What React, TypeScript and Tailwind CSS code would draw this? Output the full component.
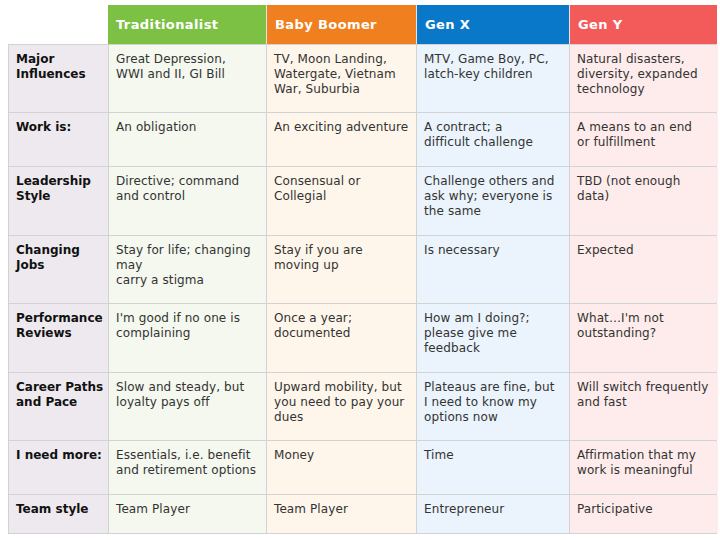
const headers = [
  { title: "Traditionalist", bg: "bg-[#7cc143]" },
  { title: "Baby Boomer", bg: "bg-[#f07f1f]" },
  { title: "Gen X", bg: "bg-[#0a78c8]" },
  { title: "Gen Y", bg: "bg-[#f35b5b]" },
];

const colBg = ["bg-[#f4f8ef]", "bg-[#fef6ea]", "bg-[#ebf4fc]", "bg-[#fdeceb]"];
const colW = ["w-[158px]", "w-[150px]", "w-[153px]", "w-[148px]"];

type Row = { label: string[]; h: string; cells: string[][] };

const rows: Row[] = [
  {
    label: ["Major", "Influences"],
    h: "h-[69px]",
    cells: [
      ["Great Depression,", "WWI and II, GI Bill"],
      ["TV, Moon Landing,", "Watergate, Vietnam", "War, Suburbia"],
      ["MTV, Game Boy, PC,", "latch-key children"],
      ["Natural disasters,", "diversity, expanded", "technology"],
    ],
  },
  {
    label: ["Work is:"],
    h: "h-[54px]",
    cells: [
      ["An obligation"],
      ["An exciting adventure"],
      ["A contract; a", "difficult challenge"],
      ["A means to an end", "or fulfillment"],
    ],
  },
  {
    label: ["Leadership", "Style"],
    h: "h-[69px]",
    cells: [
      ["Directive; command", "and control"],
      ["Consensual or", "Collegial"],
      ["Challenge others and", "ask why; everyone is", "the same"],
      ["TBD (not enough", "data)"],
    ],
  },
  {
    label: ["Changing", "Jobs"],
    h: "h-[68px]",
    cells: [
      ["Stay for life; changing", "may", "carry a stigma"],
      ["Stay if you are", "moving up"],
      ["Is necessary"],
      ["Expected"],
    ],
  },
  {
    label: ["Performance", "Reviews"],
    h: "h-[69px]",
    cells: [
      ["I'm good if no one is", "complaining"],
      ["Once a year;", "documented"],
      ["How am I doing?;", "please give me", "feedback"],
      ["What…I'm not", "outstanding?"],
    ],
  },
  {
    label: ["Career Paths", "and Pace"],
    h: "h-[68px]",
    cells: [
      ["Slow and steady, but", "loyalty pays off"],
      ["Upward mobility, but", "you need to pay your", "dues"],
      ["Plateaus are fine, but", "I need to know my", "options now"],
      ["Will switch frequently", "and fast"],
    ],
  },
  {
    label: ["I need more:"],
    h: "h-[54px]",
    cells: [
      ["Essentials, i.e. benefit", "and retirement options"],
      ["Money"],
      ["Time"],
      ["Affirmation that my", "work is meaningful"],
    ],
  },
  {
    label: ["Team style"],
    h: "h-[39px]",
    cells: [["Team Player"], ["Team Player"], ["Entrepreneur"], ["Participative"]],
  },
];

function Lines({ lines }: { lines: string[] }) {
  return (
    <>
      {lines.map((l, i) => (
        <div key={i} className="whitespace-nowrap">{l}</div>
      ))}
    </>
  );
}

export default function App() {
  return (
    <div className="w-[720px] h-[540px] bg-white pt-[5px] pl-[8px] font-['DejaVu_Sans',sans-serif]">
      {/* header */}
      <div className="flex h-[39px]">
        <div className="w-[100px]" />
        {headers.map((h, i) => (
          <div
            key={h.title}
            className={`${colW[i]} ${h.bg} ${i > 0 ? "border-l border-[#e4e4e4]" : ""} flex items-center pl-[8px] text-[13px] font-bold tracking-[0.4px] text-white`}
          >
            {h.title}
          </div>
        ))}
      </div>

      {/* body */}
      <div className="w-[709px] border-l border-[#d2d2d2]">
        {rows.map((r, ri) => (
          <div key={ri} className={`flex ${r.h} border-b border-[#d2d2d2] ${ri === 0 ? "border-t" : ""}`}>
            <div className="w-[100px] shrink-0 bg-[#ede9ee] border-r border-[#d2d2d2] pl-[7px] pt-[7px] text-[12px] leading-[15px] font-bold text-[#111]">
              <Lines lines={r.label} />
            </div>
            {r.cells.map((c, ci) => (
              <div
                key={ci}
                className={`${colW[ci]} shrink-0 ${colBg[ci]} ${ci < 3 ? "border-r" : ""} border-[#d2d2d2] pl-[7px] pt-[7px] text-[12px] leading-[15px] tracking-[0.1px] text-[#333]`}
              >
                <Lines lines={c} />
              </div>
            ))}
          </div>
        ))}
      </div>
    </div>
  );
}
